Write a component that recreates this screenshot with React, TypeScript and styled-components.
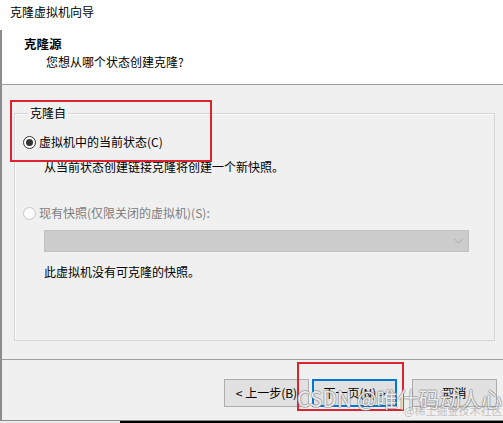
import React from "react";
import styled, { createGlobalStyle } from "styled-components";

const Global = createGlobalStyle`
  html, body { margin: 0; padding: 0; background: #f0f0f0; }
  * { box-sizing: border-box; }
`;

const FONT = `"Noto Sans CJK SC", "Noto Sans", sans-serif`;

const Window = styled.div`
  position: relative;
  width: 503px;
  height: 423px;
  overflow: hidden;
  background: #f0f0f0;
  font-family: ${FONT};
  font-size: 12px;
  color: #000;
  display: flex;
  flex-direction: column;
`;

const TitleBar = styled.div`
  height: 30px;
  flex: none;
  background: #fff;
  padding: 4px 10px 0;
  line-height: 16px;
`;

const Header = styled.div`
  height: 55px;
  flex: none;
  background: #fff;
  border-left: 2px solid #8c8c8c;
  border-bottom: 1px solid #a0a0a0;
  padding: 6px 0 0 22px;
  display: flex;
  flex-direction: column;
  gap: 2px;
`;

const HeaderTitle = styled.div`
  font-weight: 700;
  font-size: 12.5px;
  line-height: 16px;
`;

const HeaderSub = styled.div`
  line-height: 16px;
  padding-left: 22px;
`;

const Body = styled.div`
  height: 275px;
  flex: none;
  border-left: 2px solid #8c8c8c;
  border-bottom: 1px solid #a0a0a0;
  padding: 20px 8px 0 12px;
`;

const Group = styled.fieldset`
  margin: 0;
  padding: 13px 0 0 8px;
  min-width: 0;
  height: 236px;
  border: 1px solid #d6d6d6;
  box-shadow: inset 1px 1px 0 #fafafa;
  display: flex;
  flex-direction: column;
  align-items: flex-start;
`;

const Legend = styled.legend`
  margin-left: 5px;
  padding: 0 2px;
  line-height: 16px;
`;

const Option = styled.label<{ $disabled?: boolean; $top?: number }>`
  display: flex;
  align-items: center;
  gap: 3px;
  line-height: 16px;
  margin-top: ${(p) => p.$top ?? 0}px;
  color: ${(p) => (p.$disabled ? "#7d7d7d" : "#000")};
`;

const Radio = styled.span<{ $checked?: boolean; $disabled?: boolean }>`
  width: 13px;
  height: 13px;
  flex: none;
  border-radius: 50%;
  border: 1px solid ${(p) => (p.$disabled ? "#c6c6c6" : "#333")};
  background: ${(p) => (p.$disabled ? "#fcfcfc" : "#fff")};
  display: flex;
  align-items: center;
  justify-content: center;
  &::after {
    content: "";
    width: 7px;
    height: 7px;
    border-radius: 50%;
    background: #333;
    display: ${(p) => (p.$checked ? "block" : "none")};
  }
`;

const Note = styled.div<{ $top: number }>`
  margin-top: ${(p) => p.$top}px;
  margin-left: 21px;
  line-height: 16px;
`;

const Select = styled.div`
  margin-top: 9px;
  margin-left: 21px;
  width: 425px;
  height: 22px;
  background: #cccccc;
  border: 1px solid #c2c2c2;
  display: flex;
  align-items: center;
  justify-content: flex-end;
  padding-right: 5px;
`;

const Footer = styled.div`
  height: 61px;
  flex: none;
  border-left: 2px solid #8c8c8c;
  border-bottom: 1px solid #8c8c8c;
  padding: 19px 6px 0 0;
  display: flex;
  justify-content: flex-end;
  align-items: flex-start;
`;

const Button = styled.div<{ $primary?: boolean; $gap?: number }>`
  width: 85px;
  height: 28px;
  margin-left: ${(p) => p.$gap ?? 0}px;
  background: #e1e1e1;
  border: ${(p) => (p.$primary ? "2px solid #0078d7" : "1px solid #adadad")};
  display: flex;
  align-items: center;
  justify-content: center;
  line-height: 16px;
  white-space: pre;
`;

const BottomStrip = styled.div`
  height: 2px;
  flex: none;
  display: flex;
`;

const StripLight = styled.div`
  width: 120px;
  background: #ececec;
`;

const StripDark = styled.div`
  flex: 1;
  background: #000;
`;

const Annotation = styled.div<{ $x: number; $y: number; $w: number; $h: number }>`
  position: absolute;
  left: ${(p) => p.$x}px;
  top: ${(p) => p.$y}px;
  width: ${(p) => p.$w}px;
  height: ${(p) => p.$h}px;
  border: 2px solid #dd2330;
  pointer-events: none;
`;

const Watermark = styled.div`
  position: absolute;
  left: 297px;
  top: 385px;
  font-size: 21px;
  line-height: 26px;
  color: rgba(255, 255, 255, 0.85);
  text-shadow: 1px 0 0 rgba(110, 110, 110, 0.45), -1px 0 0 rgba(110, 110, 110, 0.45),
    0 1px 0 rgba(110, 110, 110, 0.45), 0 -1px 0 rgba(110, 110, 110, 0.45);
  white-space: nowrap;
  pointer-events: none;
`;

const WatermarkSmall = styled.div`
  position: absolute;
  left: 404px;
  top: 403px;
  font-size: 11px;
  line-height: 14px;
  color: rgba(150, 150, 150, 0.55);
  white-space: nowrap;
  pointer-events: none;
`;

export default function App() {
  return (
    <>
      <Global />
      <Window>
        <TitleBar>克隆虚拟机向导</TitleBar>
        <Header>
          <HeaderTitle>克隆源</HeaderTitle>
          <HeaderSub>您想从哪个状态创建克隆?</HeaderSub>
        </Header>
        <Body>
          <Group>
            <Legend>克隆自</Legend>
            <Option>
              <Radio $checked />
              虚拟机中的当前状态(C)
            </Option>
            <Note $top={9}>从当前状态创建链接克隆将创建一个新快照。</Note>
            <Option $disabled $top={30}>
              <Radio $disabled />
              现有快照(仅限关闭的虚拟机)(S):
            </Option>
            <Select>
              <svg width="9" height="6" viewBox="0 0 9 6">
                <path d="M0.5 1 L4.5 5 L8.5 1" fill="none" stroke="#a6a6a6" strokeWidth="1" />
              </svg>
            </Select>
            <Note $top={12}>此虚拟机没有可克隆的快照。</Note>
          </Group>
        </Body>
        <Footer>
          <Button>{"< 上一步(B)"}</Button>
          <Button $primary $gap={3}>{"下一页(N) >"}</Button>
          <Button $gap={15}>取消</Button>
        </Footer>
        <BottomStrip>
          <StripLight />
          <StripDark />
        </BottomStrip>
        <Annotation $x={10} $y={100} $w={202} $h={62} />
        <Annotation $x={297} $y={362} $w={107} $h={49} />
        <Watermark>CSDN @唯什码动人心</Watermark>
        <WatermarkSmall>@稀土掘金技术社区</WatermarkSmall>
      </Window>
    </>
  );
}
